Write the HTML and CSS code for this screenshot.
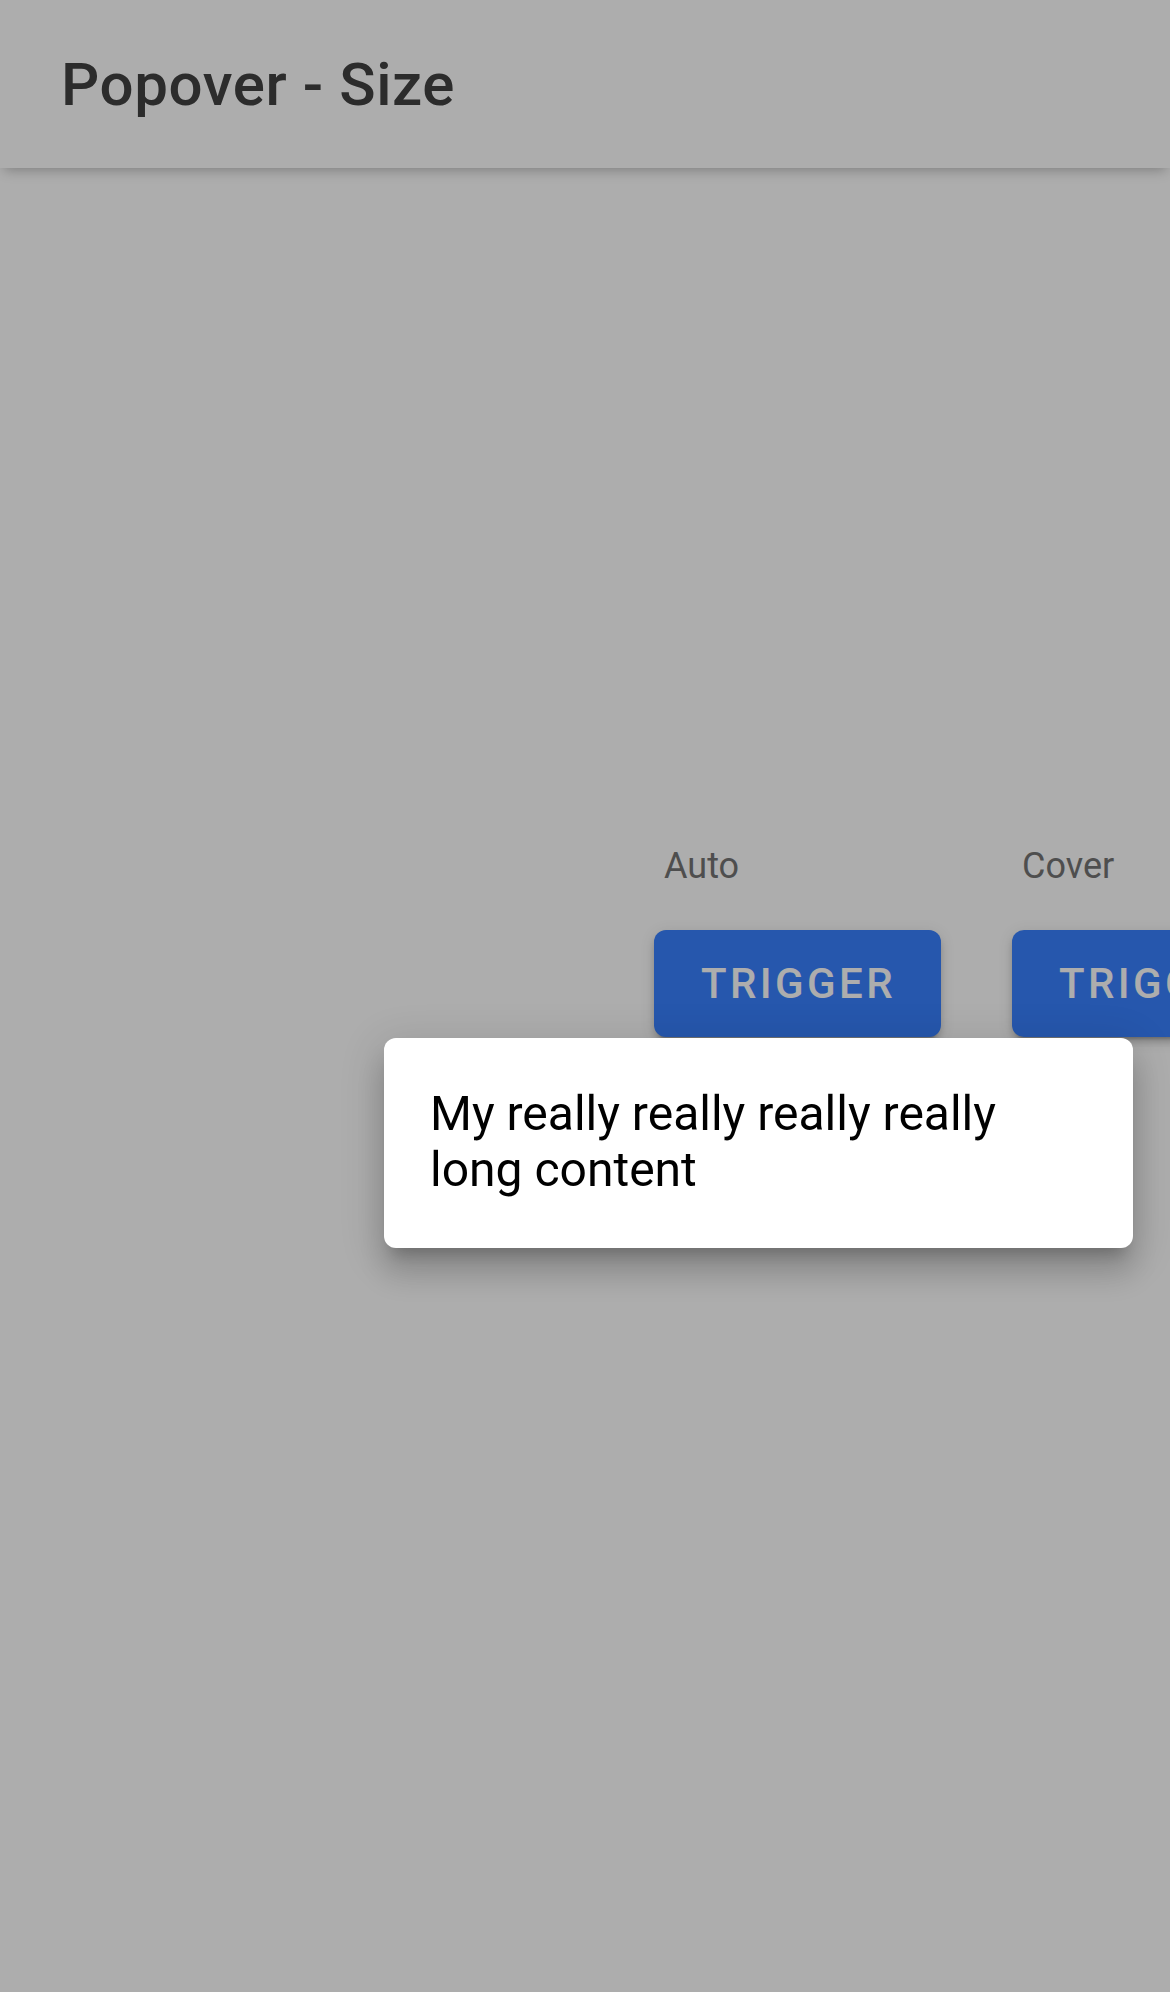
FILE: index.html
```html
<!DOCTYPE html>
<html lang="en">
<head>
<meta charset="utf-8">
<title>Popover - Size</title>
<link rel="stylesheet" href="styles.css">
</head>
<body>
<div class="app">
  <header class="toolbar">
    <h1 class="title">Popover - Size</h1>
  </header>
  <main class="content">
    <div class="options">
      <div class="option">
        <span class="label">Auto</span>
        <button class="btn">Trigger</button>
      </div>
      <div class="option">
        <span class="label">Cover</span>
        <button class="btn">Trigger</button>
      </div>
    </div>
  </main>
</div>
<div class="backdrop"></div>
<div class="popover">
  <p class="popover-text">My really really really really long content</p>
</div>
</body>
</html>
```

FILE: styles.css
```css
html, body {
  margin: 0;
  padding: 0;
  width: 1170px;
  height: 1992px;
  overflow: hidden;
  background: #ffffff;
  font-family: Roboto, "Liberation Sans", sans-serif;
}

.app {
  width: 1170px;
  height: 1992px;
  overflow: hidden;
  background: #ffffff;
}

.toolbar {
  position: relative;
  z-index: 1;
  height: 168px;
  display: flex;
  align-items: center;
  padding: 0 0 0 61px;
  background: #ffffff;
  box-shadow: 0 6px 12px -4px rgba(0, 0, 0, 0.28);
}

.title {
  margin: 0;
  font-size: 60px;
  font-weight: 500;
  color: #424242;
  letter-spacing: 0.6px;
  line-height: 1;
  padding-top: 2px;
  white-space: nowrap;
}

.content {
  padding: 677px 0 0 654px;
}

.options {
  display: flex;
  gap: 71px;
}

.option {
  display: flex;
  flex-direction: column;
  align-items: flex-start;
  flex: none;
}

.label {
  font-size: 36px;
  line-height: 42px;
  color: #747474;
  padding-left: 10px;
}

.btn {
  margin-top: 43px;
  width: 287px;
  height: 107px;
  border: none;
  border-radius: 12px;
  background: #3880ff;
  color: #ffffff;
  font-family: Roboto, "Liberation Sans", sans-serif;
  font-size: 42px;
  font-weight: 500;
  letter-spacing: 3.4px;
  text-transform: uppercase;
  white-space: nowrap;
  padding: 0 0 0 2px;
  box-shadow: 0 6px 3px -4px rgba(0,0,0,0.2), 0 6px 6px 0 rgba(0,0,0,0.14), 0 3px 15px 0 rgba(0,0,0,0.12);
}

.backdrop {
  position: fixed;
  inset: 0;
  background: rgba(0, 0, 0, 0.32);
  z-index: 5;
}

.popover {
  position: absolute;
  z-index: 10;
  left: 384px;
  top: 1038px;
  width: 749px;
  height: 210px;
  box-sizing: border-box;
  padding: 48px 48px 48px 46px;
  background: #ffffff;
  border-radius: 12px;
  box-shadow: 0 15px 15px -9px rgba(0,0,0,0.2), 0 24px 30px 3px rgba(0,0,0,0.14), 0 9px 42px 6px rgba(0,0,0,0.12);
}

.popover-text {
  margin: 0;
  font-size: 48px;
  line-height: 56px;
  color: #000000;
}
```
